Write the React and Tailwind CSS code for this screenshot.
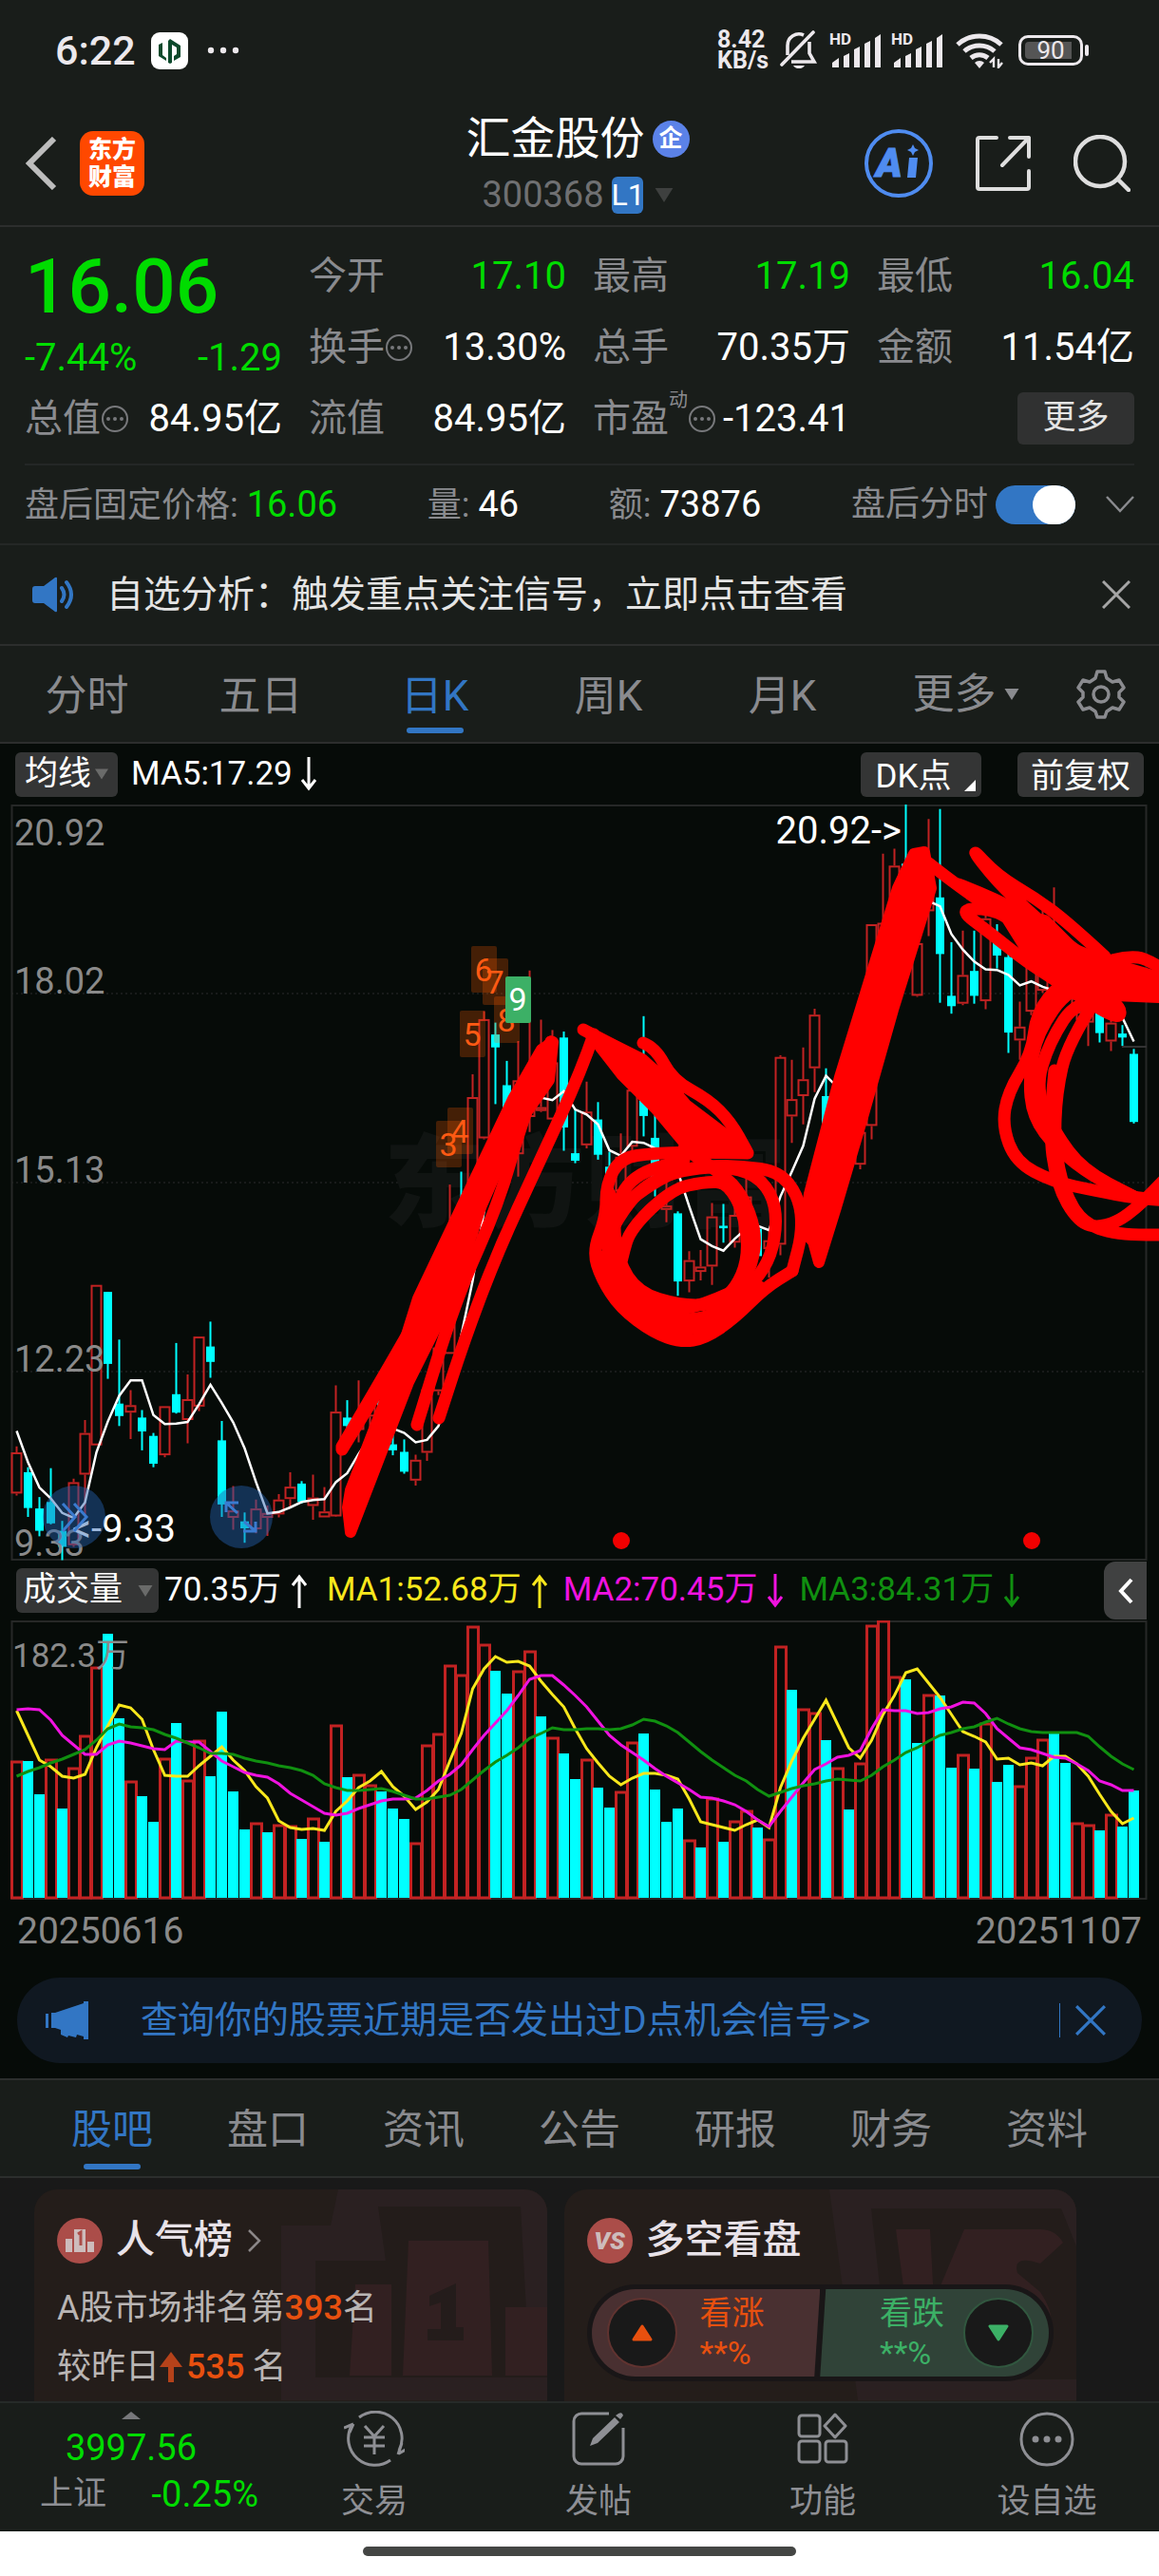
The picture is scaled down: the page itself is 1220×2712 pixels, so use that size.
import React, { useState } from 'react'

// [high, body top, body bottom, low, rising], levels counted down from the top of the pane
const candles = [
	[1303, 1315, 1398, 1402, 1], [1345, 1355, 1427, 1445, 0], [1405, 1428, 1473, 1484, 0], [1347, 1415, 1458, 1460, 0], [1453, 1473, 1505, 1532, 0],
	[1368, 1375, 1502, 1505, 1], [1250, 1276, 1360, 1440, 1], [978, 978, 1301, 1301, 1], [992, 992, 1137, 1167, 0], [1088, 1217, 1242, 1262, 0],
	[1190, 1220, 1235, 1288, 1], [1230, 1245, 1273, 1311, 0], [1276, 1282, 1338, 1345, 0], [1222, 1222, 1321, 1325, 1], [1095, 1198, 1235, 1237, 0],
	[1158, 1208, 1250, 1297, 1], [1082, 1082, 1223, 1232, 1], [1052, 1102, 1133, 1165, 0], [1252, 1291, 1420, 1445, 0], [1383, 1432, 1447, 1471, 1],
	[1436, 1454, 1468, 1497, 0], [1410, 1428, 1470, 1478, 1], [1422, 1437, 1447, 1483, 1], [1399, 1410, 1440, 1446, 1], [1355, 1384, 1409, 1428, 1],
	[1373, 1378, 1415, 1418, 0], [1360, 1406, 1423, 1451, 1], [1385, 1434, 1446, 1446, 1], [1180, 1233, 1444, 1445, 1], [1210, 1245, 1262, 1290, 0],
	[1170, 1245, 1270, 1295, 1], [1200, 1215, 1243, 1270, 1], [1175, 1210, 1250, 1280, 0], [1260, 1299, 1311, 1321, 0], [1289, 1314, 1354, 1358, 0],
	[1320, 1330, 1372, 1382, 1], [1180, 1188, 1316, 1332, 1], [1100, 1104, 1192, 1200, 1], [776, 985, 1117, 1117, 1], [750, 850, 900, 971, 0],
	[554, 600, 928, 930, 1], [427, 443, 683, 685, 1], [450, 474, 500, 614, 0], [527, 576, 700, 755, 0], [487, 566, 715, 760, 1],
	[345, 560, 640, 670, 1], [444, 620, 628, 630, 1], [465, 530, 645, 645, 1], [468, 480, 661, 708, 0], [625, 713, 728, 733, 0],
	[569, 629, 697, 703, 1], [610, 645, 716, 726, 0], [710, 740, 790, 800, 0], [673, 720, 790, 800, 1], [583, 585, 700, 720, 1],
	[437, 520, 638, 679, 0], [620, 682, 773, 800, 0], [765, 818, 827, 852, 1], [830, 834, 971, 1000, 0], [910, 928, 971, 993, 1],
	[908, 941, 952, 969, 1], [813, 840, 941, 978, 1], [815, 859, 864, 893, 0], [820, 837, 893, 903, 1], [740, 800, 850, 870, 1],
	[855, 865, 920, 922, 0], [868, 888, 906, 963, 1], [516, 519, 897, 918, 1], [525, 604, 639, 692, 1], [500, 564, 598, 655, 1],
	[422, 434, 542, 590, 1], [542, 598, 653, 660, 0], [570, 600, 700, 720, 1], [650, 700, 728, 730, 0], [600, 670, 736, 745, 1],
	[252, 252, 658, 685, 1], [110, 249, 400, 450, 1], [100, 134, 300, 330, 1], [11, 130, 200, 260, 0], [200, 290, 396, 398, 1],
	[40, 140, 226, 276, 1], [20, 198, 312, 410, 0], [288, 396, 417, 432, 0], [265, 354, 412, 415, 1], [265, 346, 396, 412, 0],
	[230, 240, 407, 423, 1], [252, 274, 315, 341, 0], [310, 318, 470, 511, 0], [408, 458, 486, 525, 1], [300, 310, 428, 435, 1],
	[210, 300, 386, 390, 1], [178, 280, 340, 380, 1], [350, 370, 390, 395, 0], [330, 400, 432, 445, 1], [350, 400, 450, 497, 1],
	[400, 420, 471, 490, 0], [440, 450, 488, 507, 1], [455, 472, 480, 497, 0], [503, 513, 650, 653, 0],
]

const ma5 = [
	1272, 1335, 1386, 1408, 1437, 1447, 1416, 1315, 1253, 1201, 1170, 1170, 1240, 1258, 1257, 1254, 1218, 1179, 1216, 1255, 1307, 1375, 1438, 1435, 1426,
	1415, 1411, 1409, 1375, 1357, 1318, 1285, 1262, 1267, 1276, 1295, 1290, 1262, 1190, 1080, 970, 830, 700, 610, 572, 590, 601, 606, 588, 625,
	635, 655, 707, 718, 690, 692, 703, 707, 750, 820, 886, 900, 909, 885, 865, 859, 868, 800, 750, 698, 603, 557, 580, 640, 630,
	590, 510, 410, 300, 215, 205, 216, 272, 303, 327, 343, 344, 354, 375, 367, 378, 385, 378, 364, 370, 395, 425, 440, 488,
]

// bar tops; a negative one is a falling day
const volumes = [
	640, -640, -747, 634, -792, 663, 560, 345, -238, -507, 705, -751, -834, 632, -522, 702, 576, -690, -486, -737, -857, 837, -866, 841, 845,
	-887, 822, -897, 526, -693, 684, 716, -738, -792, -825, 898, 590, 554, 337, 367, 215, 273, -357, -427, 357, 292, -499, 567, -616, -698,
	635, -725, -788, 738, 581, -553, -730, -834, -792, 891, -913, 758, -895, 831, 797, -852, 886, 277, -415, 475, 488, -576, 662, -795, 647,
	211, 197, 373, -382, -585, 432, -435, -662, 620, -666, 520, -707, -652, 720, 628, 572, -555, -648, 836, 843, -860, 810, -848, -735,
]

const volumeLines = [
	{
		color: '#f8e71c',
		points: [
			482, 560, 637, 658, 690, 695, 682, 600, 530, 463, 472, 510, 605, 685, 689, 688, 655, 627, 597, 637, 672, 722, 757, 829, 850,
			856, 853, 859, 800, 767, 726, 704, 674, 722, 752, 793, 770, 732, 640, 553, 412, 350, 312, 328, 327, 342, 388, 430, 470, 540,
			602, 648, 690, 716, 694, 679, 681, 687, 698, 760, 832, 841, 850, 859, 842, 828, 852, 725, 640, 570, 508, 450, 525, 600, 633,
			575, 495, 435, 361, 350, 395, 440, 495, 547, 562, 580, 634, 633, 653, 648, 656, 626, 626, 650, 690, 745, 800, 839, 822,
		],
	},
	{
		color: '#f012e0',
		points: [
			480, 475, 480, 512, 560, 590, 619, 621, 590, 578, 583, 594, 602, 604, 577, 580, 580, 610, 640, 660, 677, 687, 692, 712, 743,
			763, 785, 807, 811, 806, 790, 778, 767, 761, 760, 758, 735, 705, 684, 652, 605, 560, 520, 483, 435, 382, 370, 372, 400, 435,
			470, 515, 560, 590, 613, 638, 664, 690, 709, 730, 754, 759, 766, 778, 800, 828, 847, 800, 755, 710, 668, 650, 628, 624, 608,
			540, 478, 483, 483, 492, 487, 475, 470, 456, 458, 490, 540, 570, 600, 606, 618, 630, 631, 650, 670, 703, 715, 733, 735,
		],
	},
	{
		color: '#109010',
		points: [
			688, 675, 662, 648, 636, 620, 604, 575, 540, 524, 532, 535, 542, 556, 570, 585, 600, 616, 616, 620, 632, 641, 648, 657, 661,
			672, 686, 712, 726, 735, 734, 732, 728, 737, 749, 760, 762, 756, 748, 730, 700, 670, 645, 624, 600, 570, 553, 537, 541, 541,
			539, 540, 542, 538, 526, 510, 516, 530, 552, 580, 612, 638, 663, 685, 705, 732, 752, 740, 727, 718, 712, 705, 698, 702, 704,
			687, 660, 638, 615, 600, 577, 560, 550, 540, 532, 518, 507, 525, 540, 547, 551, 552, 550, 552, 562, 595, 627, 650, 668,
		],
	},
]

const counts = [
	{ n: 3, x: 459, y: 333 },
	{ n: 4, x: 471, y: 319 },
	{ n: 5, x: 484, y: 217 },
	{ n: 6, x: 496, y: 149 },
	{ n: 7, x: 508, y: 162 },
	{ n: 8, x: 520, y: 202 },
]

// hand-drawn marker: filled patches and single strokes
const markerFills = [
	'M369 722 L410 616 L440 520 L540 310 L570 258 L582 250 L578 290 L543 340 L506 424 L474 520 L430 608 L369 766 L366 740Z',
	'M620 240 L676 268 L700 290 L722 316 L763 347 L785 367 L720 356 L690 320 L655 285Z',
	'M846 450 L852 410 L884 287 L945 88 L962 52 L973 50 L980 88 L940 216 L908 329 L880 424 L862 482 L856 460Z',
	'M1055 112 L1100 122 L1130 152 L1165 166 L1220 182 L1220 203 L1150 200 L1090 168Z',
]

const markerStrokes = [
	[[360, 679], [430, 565], [470, 500], [580, 250]],
	[[360, 676], [405, 600], [455, 512], [540, 330], [580, 250]],
	[[580, 250], [549, 334], [525, 420], [480, 520], [439, 653]],
	[[625, 242], [612, 280], [568, 376], [525, 468], [490, 560], [462, 646]],
	[[614, 237], [677, 270], [715, 300]],
	[[677, 251], [690, 256], [708, 290], [746, 311], [769, 334], [786, 365]],
	[[787, 367], [738, 366], [688, 367], [653, 372], [638, 400], [638, 434], [624, 470], [633, 499], [653, 530], [688, 556], [717, 566], [742, 562], [773, 541], [805, 509], [834, 491]],
	[[661, 418], [699, 388], [746, 380], [781, 381], [820, 386], [841, 413], [845, 449], [834, 491]],
	[[638, 460], [655, 425], [690, 392], [746, 380], [790, 386], [812, 408], [818, 438], [812, 475], [795, 502], [760, 535], [719, 545], [670, 525], [645, 490], [638, 460]],
	[[650, 500], [655, 475], [664, 446], [707, 405], [742, 397], [766, 398], [784, 432], [788, 478], [773, 512], [750, 527], [715, 527], [672, 514], [650, 480], [645, 430], [665, 390], [720, 374]],
	[[640, 440], [646, 495], [680, 535], [730, 553], [775, 530]],
	[[642, 410], [644, 470], [665, 525], [720, 535], [790, 505]],
	[[630, 475], [648, 515], [682, 545], [722, 556], [765, 538], [800, 508]],
	[[720, 362], [760, 388], [782, 412], [796, 450], [792, 485], [776, 510]],
	[[978, 62], [1011, 88], [1057, 118], [1108, 146], [1151, 177]],
	[[1163, 160], [1124, 124], [1089, 98], [1050, 75], [1019, 42], [1050, 82], [1089, 118], [1128, 151], [1155, 168]],
	[[1009, 84], [1050, 100], [1100, 128], [1150, 170]],
	[[1110, 150], [1060, 112], [1006, 108], [1042, 135], [1077, 163], [1108, 183], [1147, 209], [1178, 226], [1180, 214], [1163, 203]],
	[[1240, 184], [1209, 162], [1186, 160], [1159, 167], [1116, 188], [1091, 219], [1086, 262], [1061, 303], [1055, 338], [1069, 376], [1108, 397], [1155, 407], [1194, 414], [1240, 418]],
	[[1240, 193], [1174, 183], [1125, 193], [1092, 240], [1083, 287], [1087, 329], [1112, 362], [1151, 392], [1194, 413]],
	[[1170, 206], [1135, 203], [1104, 251], [1090, 300], [1110, 345], [1140, 385], [1194, 413]],
	[[1155, 203], [1124, 251], [1112, 303], [1110, 360], [1120, 407], [1139, 440], [1174, 453], [1240, 453]],
	[[1110, 280], [1104, 340], [1112, 400], [1135, 440], [1159, 446], [1190, 432], [1240, 380]],
]

const tickX = i => 17.5 + i * 12
const priceY = level => Math.round((level - 11) * 5.23) / 10
const volumeY = level => Math.round((level - 197) / 3)

const polyline = (levels, toY) => levels.map((v, i) => `${tickX(i)},${toY(v)}`).join(' ')

const smooth = (points) => {
	let d = `M${points[0].join(' ')}`
	for (let i = 1; i < points.length - 1; i++) {
		const [x, y] = points[i]
		const [nx, ny] = points[i + 1]
		d += ` Q${x} ${y} ${(x + nx) / 2} ${(y + ny) / 2}`
	}
	return d + ` L${points[points.length - 1].join(' ')}`
}

const Caret = ({ className }) => (
	<svg viewBox="0 0 20 16" className={className} fill="currentColor"><path d="M0 0h20L10 16z" /></svg>
)

const Trend = ({ up }) => (
	<svg viewBox="0 0 18 36" className="w-[18px] h-9 shrink-0" fill="none" stroke="currentColor" strokeWidth="3">
		<path d={up ? 'M9 36V3M2 12l7-9 7 9' : 'M9 0v33M2 24l7 9 7-9'} />
	</svg>
)

const Cross = ({ className }) => (
	<svg viewBox="0 0 30 30" className={className} fill="none" stroke="currentColor" strokeWidth="3"><path d="M1 1l28 28M29 1L1 29" /></svg>
)

const InfoDot = () => (
	<svg viewBox="0 0 30 30" className="w-[30px] h-[30px] shrink-0 text-[#77787b]">
		<circle cx="15" cy="15" r="13" fill="none" stroke="currentColor" strokeWidth="2" />
		<g fill="currentColor"><circle cx="8" cy="15" r="2" /><circle cx="15" cy="15" r="2" /><circle cx="22" cy="15" r="2" /></g>
	</svg>
)

const Signal = () => (
	<div className="relative w-[54px] h-[38px]">
		<span className="absolute left-0 top-0 text-[17px] leading-[14px] font-bold">HD</span>
		<svg viewBox="0 0 54 38" className="w-full h-full" fill="currentColor">
			<path d="M3 37v-5l7-5v10zM15 37V25l6-3v15zM26 37V18l6-3v22zM37 37V12l6-3v28zM48 37V6l6-4v35z" />
		</svg>
	</div>
)

const StatusBar = () => (
	<div className="flex items-center h-[106px] pl-[58px] pr-[74px] text-[#ece8ec]">
		<span className="text-[43px] font-medium">6:22</span>
		<svg viewBox="0 0 39 39" className="w-[39px] h-[39px] ml-4">
			<rect width="39" height="39" rx="9" fill="#fff" />
			<path d="M8 13l4-2v13l4 3v3l-8-5zM18 9l2-2 11 7v12l-7 4v-5l3-2v-7l-5-3v19l-2 1-2-1z" fill="#0d4a2c" />
		</svg>
		<svg viewBox="0 0 34 8" className="w-[34px] h-2 ml-5" fill="currentColor"><circle cx="4" cy="4" r="3.2" /><circle cx="17" cy="4" r="3.2" /><circle cx="30" cy="4" r="3.2" /></svg>
		<div className="ml-auto flex items-center">
			<div className="text-[25px] leading-[22px] font-bold">8.42<br />KB/s</div>
			<svg viewBox="0 0 40 42" className="w-10 h-[42px] ml-3" fill="none" stroke="currentColor" strokeWidth="3.6">
				<path d="M8 26V16a12 12 0 0 1 17-11M31 12v12l5 9H12" />
				<path d="M2 36L35 2" strokeLinecap="round" />
				<path d="M14 37h12a6.500 5 0 0 1-12 0z" fill="currentColor" stroke="none" />
			</svg>
			<div className="flex gap-[11px] ml-3"><Signal /><Signal /></div>
			<svg viewBox="0 0 50 38" className="w-[50px] h-[38px] ml-[14px]" fill="none" stroke="currentColor" strokeWidth="5">
				<path d="M2 13a34 34 0 0 1 46 0M9 20a24 24 0 0 1 32 0M16 27a14 14 0 0 1 18 0" />
				<path d="M20 32a7 7 0 0 1 10 0l-5 6z" fill="currentColor" stroke="none" />
				<path d="M40 37V28l-4 4M45 28v9l4-5" strokeWidth="2.400" />
			</svg>
			<div className="relative ml-4 w-[68px] h-8 border-[3px] border-[#ece8ec] rounded-[10px] p-1">
				<div className="w-[49px] h-full bg-[#555] rounded-l-[4px]" />
				<span className="absolute inset-0 text-center text-[26px] leading-[27px]">90</span>
			</div>
			<div className="w-1 h-3 ml-[2px] rounded-sm bg-[#ece8ec]" />
		</div>
	</div>
)

const Header = () => (
	<header className="grid grid-cols-[1fr_auto_1fr] items-center h-[133px] pl-[26px] pr-[30px] border-b-2 border-[#2c2e2d]">
		<div className="flex items-center gap-6">
			<button aria-label="返回" className="text-[#bdbdbd]">
				<svg viewBox="0 0 34 56" className="w-[34px] h-14" fill="none" stroke="currentColor" strokeWidth="6"><path d="M31 2L5 28l26 26" /></svg>
			</button>
			<div className="w-[68px] h-[68px] rounded-[14px] bg-[#ff4800] text-white text-[25px] leading-[29px] font-black text-center pt-[5px]">东方<br />财富</div>
		</div>
		<div className="flex flex-col items-center pt-2">
			<h1 className="flex items-center gap-2 h-[60px] text-[47px] text-white">
				汇金股份
				<span className="w-[39px] h-[39px] rounded-full bg-[#5b82e8] text-[25px] leading-[37px] text-center font-bold">企</span>
			</h1>
			<div className="flex items-center h-[58px] text-[38px] text-[#6f7072]">
				300368
				<span className="ml-2 w-[33px] h-[39px] rounded-md bg-[#3276c4] text-white text-[32px] leading-[39px] text-center">L1</span>
				<Caret className="ml-3 w-5 h-[15px] text-[#3e403f]" />
			</div>
		</div>
		<div className="flex items-center justify-end gap-[45px] text-[#dedede]">
			<button aria-label="Ai" className="text-[#4f8cf0]">
				<svg viewBox="0 0 72 72" className="w-[72px] h-[72px]">
					<circle cx="36" cy="36" r="34" fill="none" stroke="currentColor" strokeWidth="4" />
					<text x="12" y="50" fontSize="42" fontWeight="900" fontStyle="italic" fill="currentColor" stroke="currentColor">A</text>
					<path d="M47 30h9l-2 21h-9zM51 16l2 4 4 2-4 2-2 4-2-4-4-2 4-2z" fill="currentColor" />
				</svg>
			</button>
			<button aria-label="分享">
				<svg viewBox="0 0 58 58" className="w-[58px] h-[58px]" fill="none" stroke="currentColor" strokeWidth="4" strokeLinecap="round" strokeLinejoin="round">
					<path d="M22 2H4a2 2 0 0 0-2 2v50a2 2 0 0 0 2 2h50a2 2 0 0 0 2-2V37M36 2h20v20M56 2L28 31" />
				</svg>
			</button>
			<button aria-label="搜索">
				<svg viewBox="0 0 60 60" className="w-[60px] h-[60px]" fill="none" stroke="currentColor" strokeWidth="4.500" strokeLinecap="round"><circle cx="28" cy="28" r="26" /><path d="M47 47l11 11" /></svg>
			</button>
		</div>
	</header>
)

const Quote = ({ label, sup, info, value, green }) => (
	<div className="flex items-center h-[75px] whitespace-nowrap">
		<span className="text-[#8a8b8f]">{label}</span>
		{sup && <sup className="text-[20px] -top-5 text-[#8a8b8f]">{sup}</sup>}
		{info && <InfoDot />}
		<span className={green ? 'ml-auto text-[#00dc00]' : 'ml-auto text-white'}>{value}</span>
	</div>
)

const Quotes = () => (
	<section className="grid grid-cols-4 gap-x-7 mx-[26px] pt-[14px] pb-[10px] text-[40px] border-b-2 border-[#242726]">
		<div>
			<div className="h-[98px] text-[80px] leading-[98px] font-medium text-[#00dc00]">16.06</div>
			<div className="flex items-center justify-between h-[52px] text-[#00dc00]"><span>-7.44%</span><span>-1.29</span></div>
			<Quote label="总值" info value="84.95亿" />
		</div>
		<div>
			<Quote label="今开" value="17.10" green />
			<Quote label="换手" info value="13.30%" />
			<Quote label="流值" value="84.95亿" />
		</div>
		<div>
			<Quote label="最高" value="17.19" green />
			<Quote label="总手" value="70.35万" />
			<Quote label="市盈" sup="动" info value="-123.41" />
		</div>
		<div>
			<Quote label="最低" value="16.04" green />
			<Quote label="金额" value="11.54亿" />
			<div className="flex items-center justify-end h-[75px]">
				<button className="w-[123px] h-[55px] rounded-md bg-[#303131] text-[35px] text-[#e4e4e4]">更多</button>
			</div>
		</div>
	</section>
)

const AfterHours = () => {
	const [on, setOn] = useState(true)
	return (
		<section className="flex items-center justify-between h-[84px] px-[26px] text-[36px] text-[#8a8b8f] border-b-2 border-[#242726] whitespace-nowrap">
			<div>盘后固定价格: <span className="text-[38px] text-[#00dc00]">16.06</span></div>
			<div>量: <span className="text-[38px] text-white">46</span></div>
			<div>额: <span className="text-[38px] text-white">73876</span></div>
			<div className="flex items-center">
				<label htmlFor="after-hours">盘后分时</label>
				<input
					id="after-hours"
					type="checkbox"
					checked={on}
					onChange={() => setOn(!on)}
					className="appearance-none ml-2 w-[84px] h-[41px] rounded-full bg-[#555] checked:bg-[#3276c4] before:block before:w-[45px] before:h-[41px] before:rounded-full before:bg-white checked:before:ml-[39px]"
				/>
				<button aria-label="展开" className="ml-8">
					<svg viewBox="0 0 30 18" className="w-[30px] h-[18px]" fill="none" stroke="currentColor" strokeWidth="2.500"><path d="M1 1l14 15L29 1" /></svg>
				</button>
			</div>
		</section>
	)
}

const Alert = () => (
	<section className="flex items-center h-[106px] pl-[34px] pr-[30px] border-b-2 border-[#2c2e2d]">
		<svg viewBox="0 0 46 38" className="w-[46px] h-[38px] text-[#3276c4]" fill="currentColor">
			<path d="M3 10h9L24 1q2-1 2 1v34q0 2-2 1l-12-9H3q-3 0-3-3V13q0-3 3-3z" />
			<path d="M31 12q5 7 0 14M36 6q10 13 0 26" fill="none" stroke="currentColor" strokeWidth="4" strokeLinecap="round" />
		</svg>
		<p className="ml-8 text-[39px] text-[#e4e4e4]">自选分析：触发重点关注信号，立即点击查看</p>
		<button aria-label="关闭" className="ml-auto text-[#a5a5a5]"><Cross className="w-[30px] h-[30px]" /></button>
	</section>
)

const periods = ['分时', '五日', '日K', '周K', '月K']

const PeriodTabs = () => {
	const [active, setActive] = useState('日K')
	return (
		<nav className="flex h-[103px] text-[44px] text-[#8a8b8f] border-b-2 border-[#2c2e2d]">
			{
				periods.map(name => (
					<button key={name} onClick={() => setActive(name)} className={`w-[15%] flex flex-col items-center pt-5 ${name === active ? 'text-[#3276c4]' : ''}`}>
						<span className="leading-[66px]">{name}</span>
						{name === active && <span className="w-[60px] h-[6px] rounded-full bg-[#3276c4]" />}
					</button>
				))
			}
			<button className="w-[15%] flex items-center justify-center gap-2 pl-5">更多<Caret className="w-4 h-3" /></button>
			<button aria-label="设置" className="flex-1 flex items-center justify-center">
				<svg viewBox="0 0 52 52" className="w-[52px] h-[52px]" fill="none" stroke="currentColor" strokeWidth="3.500" strokeLinejoin="round">
					<path d="M22 2h8l2 7 6 4 7-2 5 8-5 5v5l5 5-5 8-7-2-6 4-2 6h-8l-2-6-6-4-7 2-5-8 5-5v-5l-5-5 5-8 7 2 6-4z" />
					<circle cx="26" cy="26" r="8" />
				</svg>
			</button>
		</nav>
	)
}

const PriceChart = () => (
	<svg viewBox="0 0 1220 796" className="block w-full overflow-hidden" fill="none">
		<g stroke="#2b2d2c" strokeWidth="1" strokeDasharray="2 3">
			<path d="M12 199H1207M12 398H1207M12 597H1207" />
		</g>
		<rect x="12.500" y="1" width="1194" height="794" stroke="#262827" strokeWidth="2" />
		<text x="404" y="436" fontSize="106" fontWeight="900" fill="#101412">东方财富</text>
		{
			candles.map(([high, top, bottom, low, rising], i) => {
				const x = tickX(i)
				return rising
					? (
						<g key={i} stroke="#c22222" strokeWidth="2">
							<path d={`M${x} ${priceY(high)}V${priceY(top)}M${x} ${priceY(bottom)}V${priceY(low)}`} />
							<rect x={x - 5} y={priceY(top) + 1} width="10" height={Math.max(priceY(bottom) - priceY(top) - 2, 2)} />
						</g>
					)
					: (
						<g key={i} fill="#00ffff">
							<rect x={x - 1} y={priceY(high)} width="2" height={priceY(low) - priceY(high)} />
							<rect x={x - 4.5} y={priceY(top)} width="9" height={priceY(bottom) - priceY(top)} />
						</g>
					)
			})
		}
		<path d="M1181 255H1207" stroke="#333" strokeWidth="2" />
		<polyline points={polyline(ma5, priceY)} stroke="#fff" strokeWidth="2.500" />
		<g fill="#8a8a8a" fontSize="38">
			<text x="15" y="43">20.92</text>
			<text x="15" y="199">18.02</text>
			<text x="15" y="398">15.13</text>
			<text x="15" y="597">12.23</text>
			<text x="15" y="791">9.33</text>
		</g>
		<g fill="#fff" fontSize="40">
			<text x="949" y="41" textAnchor="end">20.92-&gt;</text>
			<text x="185" y="776" textAnchor="end">&lt;-9.33</text>
		</g>
		<g fill="#2460b0" fillOpacity="0.45">
			<circle cx="78" cy="750" r="33" />
			<circle cx="254" cy="750" r="33" />
		</g>
		<g stroke="#3a7bd0" strokeWidth="3">
			<path d="M66 736l13 14-13 15M78 736l13 14-13 15" />
			<path d="M250 746l-12-11M238 745v-10h13M257 755l12 10M269 755v10h-13" />
		</g>
		{
			counts.map(({ n, x, y }) => (
				<g key={n}>
					<rect x={x} y={y} width="27" height="49" rx="2" fill="#ff5a00" fillOpacity="0.25" />
					<text x={x + 13} y={y + 37} fontSize="34" fill="#ff5a14" textAnchor="middle">{n}</text>
				</g>
			))
		}
		<rect x="532" y="181" width="27" height="49" rx="2" fill="#3cb066" />
		<text x="545" y="217" fontSize="34" fill="#fff" textAnchor="middle">9</text>
		<circle cx="654" cy="775" r="9" fill="#f00000" />
		<circle cx="1086" cy="775" r="9" fill="#f00000" />
		<g stroke="#f00" strokeLinecap="round" strokeLinejoin="round">
			{markerFills.map(d => <path key={d} d={d} fill="#f00" strokeWidth="12" />)}
			{markerStrokes.map((points, i) => <path key={i} d={smooth(points)} strokeWidth="13" />)}
		</g>
	</svg>
)

const VolumeChart = () => (
	<svg viewBox="0 0 1220 294" className="block w-full" fill="none">
		<rect x="12.500" y="1" width="1194" height="292" stroke="#262827" strokeWidth="2" />
		{
			volumes.map((v, i) => {
				const y = volumeY(Math.abs(v))
				return v < 0
					? <rect key={i} x={tickX(i) - 5.5} y={y} width="11" height={292 - y} fill="#00ffff" />
					: <rect key={i} x={tickX(i) - 5} y={y + 1} width="11" height={291 - y} stroke="#c22222" strokeWidth="3" />
			})
		}
		{volumeLines.map(({ color, points }) => <polyline key={color} points={polyline(points, volumeY)} stroke={color} strokeWidth="3" />)}
		<text x="13" y="49" fontSize="35" fill="#8a8a8a">182.3万</text>
	</svg>
)

const Charts = () => (
	<section className="bg-[#060b08]">
		<div className="flex items-center h-16 px-4 text-[35px] text-white">
			<button className="flex items-center gap-1 h-[47px] pl-[10px] pr-[10px] rounded-md bg-[#343535]">均线<Caret className="w-[14px] h-3 text-[#6a6b6a]" /></button>
			<span className="flex items-center gap-2 ml-[14px] text-[35px]">MA5:17.29<Trend /></span>
			<button className="relative ml-auto w-[127px] h-[47px] pr-4 rounded-md bg-[#343535]">
				DK点
				<svg viewBox="0 0 12 12" className="absolute right-[6px] bottom-[6px] w-3 h-3" fill="currentColor"><path d="M12 0v12H0z" /></svg>
			</button>
			<button className="ml-[38px] w-[133px] h-[47px] rounded-md bg-[#343535]">前复权</button>
		</div>
		<PriceChart />
		<div className="flex items-center h-[63px] pl-[17px] pr-[13px] text-[35px] whitespace-nowrap">
			<button className="flex items-center gap-4 h-[47px] w-[150px] pl-[7px] rounded-md bg-[#343535] text-white text-[35px]">成交量<Caret className="w-4 h-3 text-[#6a6b6a]" /></button>
			<span className="flex items-center gap-[10px] ml-[6px] text-white">70.35万<Trend up /></span>
			<span className="flex items-center gap-[10px] ml-5 text-[#f8e71c]">MA1:52.68万<Trend up /></span>
			<span className="flex items-center gap-[10px] ml-4 text-[#f012e0]">MA2:70.45万<Trend /></span>
			<span className="flex items-center gap-[10px] ml-4 text-[#109010]">MA3:84.31万<Trend /></span>
			<button aria-label="收起" className="ml-auto flex items-center justify-center w-[45px] h-[61px] rounded-l-xl bg-[#404141] text-white">
				<svg viewBox="0 0 16 28" className="w-4 h-7" fill="none" stroke="currentColor" strokeWidth="4"><path d="M14 2L3 14l11 12" /></svg>
			</button>
		</div>
		<VolumeChart />
		<div className="flex items-center justify-between h-[66px] px-[18px] text-[39px] text-[#8a8a8a]"><span>20250616</span><span>20251107</span></div>
		<div className="px-[18px] pt-4 pb-4">
			<div className="flex items-center h-[90px] pl-[30px] pr-[38px] rounded-full bg-[#101821] text-[#3276c4]">
				<svg viewBox="0 0 46 40" className="w-[46px] h-10" fill="currentColor"><path d="M0 13h3v15H0zM6 12h4L40 2V0h5v40h-5v-3l-7-2-1 3-8-2-1 2-7-3v-5l-6-2H6z" /></svg>
				<a href="#signal" className="ml-[54px] text-[39px]">查询你的股票近期是否发出过D点机会信号&gt;&gt;</a>
				<span className="ml-auto w-px h-9 bg-[#3276c4]" />
				<button aria-label="关闭" className="ml-4"><Cross className="w-8 h-8" /></button>
			</div>
		</div>
	</section>
)

const infoTabs = ['股吧', '盘口', '资讯', '公告', '研报', '财务', '资料']

const InfoTabs = () => {
	const [active, setActive] = useState('股吧')
	return (
		<nav className="flex h-[105px] px-9 text-[43px] text-[#8a8b8f] border-y-2 border-[#2c2e2d]">
			{
				infoTabs.map(name => (
					<button key={name} onClick={() => setActive(name)} className={`flex-1 flex flex-col items-center pt-5 ${name === active ? 'text-[#3276c4]' : ''}`}>
						<span className="leading-[64px]">{name}</span>
						{name === active && <span className="mt-1 w-[60px] h-[6px] rounded-full bg-[#3276c4]" />}
					</button>
				))
			}
		</nav>
	)
}

const Cards = () => (
	<section className="grid grid-cols-[1fr_1fr] gap-[18px] h-[235px] pt-3 pl-9 pr-[87px] overflow-hidden bg-[#191919]">
		<article className="relative h-[250px] px-6 pt-6 rounded-3xl overflow-hidden bg-[#241d1a] text-[36px] text-[#b9b5b4]">
			<svg viewBox="0 0 280 222" className="absolute right-0 top-0 w-[280px] h-[222px]">
				<path d="M60 0h220v222H0V38h52z" fill="#2a2021" />
				<path d="M36 75h74L102 18h150l6 110h22v70H36z" fill="#231c1a" />
				<path d="M134 54h84l4 142h-94zM78 100h38v96H72zM236 124h44v72h-44z" fill="#322021" />
				<path d="M156 112l28-13v46h8v14h-38v-12h14v-28l-12 4z" fill="#241c1b" />
			</svg>
			<div className="relative flex items-center h-[60px]">
				<svg viewBox="0 0 48 48" className="w-12 h-12">
					<circle cx="24" cy="24" r="24" fill="#ab4d49" />
					<path d="M9 22h7v14H9zM18 12h12v24H18zM32 25h7v11h-7z" fill="#cdbcbc" />
					<path d="M22 17l3-2v14" fill="none" stroke="#ab4d49" strokeWidth="3" />
				</svg>
				<h2 className="ml-[14px] text-[41px] font-medium text-[#e8e2e8]">人气榜</h2>
				<svg viewBox="0 0 14 24" className="ml-4 w-[14px] h-6" fill="none" stroke="#8a8687" strokeWidth="2.500"><path d="M1 1l11 11L1 23" /></svg>
			</div>
			<p className="relative pt-3 leading-[58px]">A股市场排名第<span className="text-[#e8500f] font-medium">393</span>名</p>
			<p className="relative flex items-center pt-1 leading-[58px]">
				较昨日
				<svg viewBox="0 0 24 32" className="w-6 h-8" fill="#b5421a"><path d="M12 0l12 16h-9v16H9V16H0z" /></svg>
				<span className="ml-1 mr-2 text-[#e8500f] font-medium">535</span>名
			</p>
		</article>
		<article className="relative h-[250px] px-6 pt-6 rounded-3xl overflow-hidden bg-[#241d1a]">
			<svg viewBox="0 0 280 222" className="absolute right-0 top-0 w-[280px] h-[222px]">
				<path d="M20 0h260v222H50z" fill="#2a2021" />
				<path d="M64 20h200l16 40v140H84z" fill="#231c1a" />
				<path d="M90 42h36l4 76 32-76h80q16 0 24 14l-24 22q-30-10-24 10l24 20q28 40-10 70h-40l-10-60-24 60h-50z" fill="#322021" />
			</svg>
			<div className="relative flex items-center h-[60px]">
				<div className="w-12 h-12 rounded-full bg-[#ab4d49] text-[26px] leading-[48px] text-center font-black italic text-[#cdbcbc]">VS</div>
				<h2 className="ml-[14px] text-[41px] font-medium text-[#e8e2e8]">多空看盘</h2>
			</div>
			<div className="relative flex mt-4 h-[102px] rounded-full p-[5px] bg-[#191617] text-[34px] leading-[42px]">
				<button className="flex-1 flex items-center pl-4 rounded-l-full bg-[#493031] text-[#e8500f] [clip-path:polygon(0_0,100%_0,calc(100%_-_6px)_100%,0_100%)]">
					<span className="flex items-center justify-center w-[74px] h-[74px] rounded-full border-2 border-[#603330] bg-[#191919]">
						<svg viewBox="0 0 22 18" className="w-[22px] h-[18px]" fill="currentColor" stroke="currentColor" strokeWidth="3" strokeLinejoin="round"><path d="M11 2l9 14H2z" /></svg>
					</span>
					<span className="ml-6 text-left">看涨<br />**%</span>
				</button>
				<button className="flex-1 flex items-center justify-end pr-4 rounded-r-full bg-[#304338] text-[#3cb066] [clip-path:polygon(6px_0,100%_0,100%_100%,0_100%)]">
					<span className="mr-5 text-left">看跌<br />**%</span>
					<span className="flex items-center justify-center w-[74px] h-[74px] rounded-full border-2 border-[#31573f] bg-[#191919]">
						<svg viewBox="0 0 22 18" className="w-[22px] h-[18px]" fill="currentColor" stroke="currentColor" strokeWidth="3" strokeLinejoin="round"><path d="M11 16L2 2h18z" /></svg>
					</span>
				</button>
			</div>
		</article>
	</section>
)

const NavItem = ({ label, children }) => (
	<a href={`#${label}`} className="flex-1 flex flex-col items-center pt-2 text-[35px] text-[#8e8f94]">
		<svg viewBox="0 0 64 60" className="w-16 h-[60px]" fill="none" stroke="currentColor" strokeWidth="3">{children}</svg>
		<span className="mt-[10px] leading-[52px]">{label}</span>
	</a>
)

const BottomNav = () => (
	<nav className="flex h-[137px] border-t-2 border-[#262a28]">
		<a href="#index" className="w-[276px] flex flex-col items-center pt-[9px]">
			<svg viewBox="0 0 20 8" className="w-5 h-2 text-[#77787b]" fill="currentColor"><path d="M0 8L10 0l10 8z" /></svg>
			<span className="mt-[6px] text-[38px] leading-[48px] text-[#00dc00]">3997.56</span>
			<span className="flex justify-between w-full pl-[42px] pr-1 text-[35px] leading-[50px] text-[#8e8f94]">上证<span className="text-[38px] text-[#00dc00]">-0.25%</span></span>
		</a>
		<NavItem label="交易">
			<path d="M16 7a28 28 0 0 1 42 35M58 45l7-4M57 46l4-12M49 52A28 28 0 0 1 8 16M10 14L0 18M10 14l-4 9" />
			<path d="M22 16l10 11 10-11M32 27v19M21 28h22M21 37h22" />
		</NavItem>
		<NavItem label="发帖">
			<path d="M43 3H14a8 8 0 0 0-8 8v37a8 8 0 0 0 8 8h36a8 8 0 0 0 8-8V18" />
			<path d="M23 37l3-8 23-22 5 5-23 22zM53 3q4-2 5 2l-3 4-5-4z" fill="currentColor" stroke="none" />
		</NavItem>
		<NavItem label="功能">
			<rect x="7" y="5" width="22" height="22" rx="3" />
			<path d="M45 4l11 12-11 12-11-12z" strokeLinejoin="round" />
			<rect x="7" y="32" width="22" height="22" rx="3" />
			<rect x="35" y="32" width="22" height="22" rx="3" />
		</NavItem>
		<NavItem label="设自选">
			<circle cx="32" cy="30" r="27" />
			<g fill="currentColor" stroke="none"><circle cx="20" cy="30" r="3.500" /><circle cx="32" cy="30" r="3.500" /><circle cx="44" cy="30" r="3.500" /></g>
		</NavItem>
	</nav>
)

export default function App() {
	return (
		<div className="bg-[#191d1a] font-['Roboto','Noto_Sans_CJK_SC',sans-serif] leading-normal">
			<StatusBar />
			<Header />
			<Quotes />
			<AfterHours />
			<Alert />
			<PeriodTabs />
			<Charts />
			<InfoTabs />
			<Cards />
			<BottomNav />
			<div className="h-12 pt-4 bg-white"><div className="mx-auto w-[456px] h-[10px] rounded-full bg-[#444644]" /></div>
		</div>
	)
}
